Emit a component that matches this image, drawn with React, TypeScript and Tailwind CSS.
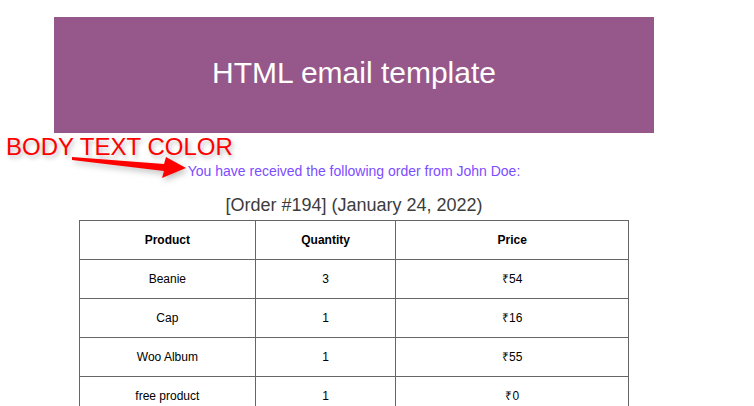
import React from "react";

const rows = [
  ["Beanie", "3", "₹54"],
  ["Cap", "1", "₹16"],
  ["Woo Album", "1", "₹55"],
  ["free product", "1", "₹0"],
];

export default function App() {
  return (
    <div
      className="relative w-[754px] h-[406px] overflow-hidden bg-white"
      style={{ fontFamily: '"Liberation Sans", Arial, sans-serif' }}
    >
      <div className="ml-[54px] pt-[17px] w-[600px]">
        <div className="h-[116px] bg-[#96588a] flex items-center justify-center pb-[4px]">
          <h1 className="text-[30px] leading-none text-white font-normal">HTML email template</h1>
        </div>
        <p className="mt-[30px] text-center text-[14px] leading-[16px] text-[#7c4dff]">
          You have received the following order from John Doe:
        </p>
        <h2 className="mt-[16px] text-center text-[18px] leading-[20px] text-[#3c3c3c]">
          [Order #194] (January 24, 2022)
        </h2>
        <table className="mt-[5px] mx-auto w-[550px] border-collapse text-[12px] text-black">
          <colgroup>
            <col className="w-[176px]" />
            <col className="w-[141px]" />
            <col className="w-[233px]" />
          </colgroup>
          <thead>
            <tr className="h-[39px]">
              <th className="border border-[#666] font-bold">Product</th>
              <th className="border border-[#666] font-bold">Quantity</th>
              <th className="border border-[#666] font-bold">Price</th>
            </tr>
          </thead>
          <tbody>
            {rows.map((r) => (
              <tr key={r[0]} className="h-[39px]">
                <td className="border border-[#666] text-center">{r[0]}</td>
                <td className="border border-[#666] text-center">{r[1]}</td>
                <td className="border border-[#666] text-center">{r[2]}</td>
              </tr>
            ))}
          </tbody>
        </table>
      </div>

      <div
        className="absolute left-[6px] top-[133px] text-[24px] leading-[28px] text-[#ff0000]"
        style={{ textShadow: "2px 3px 4px rgba(0,0,0,0.25)" }}
      >
        BODY TEXT COLOR
      </div>
      <svg
        className="absolute left-0 top-0"
        width="754"
        height="406"
        viewBox="0 0 754 406"
        style={{ filter: "drop-shadow(2px 3px 3px rgba(0,0,0,0.25))" }}
      >
        <polygon
          points="72,157 164,164 166,157 186,168 162,178 164,171 72,160"
          fill="#ff0000"
        />
      </svg>
    </div>
  );
}
